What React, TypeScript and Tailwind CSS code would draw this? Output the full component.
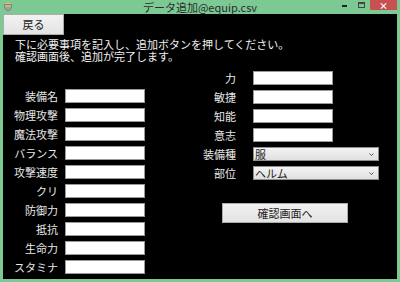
const leftFields = ["装備名", "物理攻撃", "魔法攻撃", "バランス", "攻撃速度", "クリ", "防御力", "抵抗", "生命力", "スタミナ"];
const rightFields = ["力", "敏捷", "知能", "意志"];
const selects = [
  { label: "装備種", value: "服" },
  { label: "部位", value: "ヘルム" },
];

const font = { fontFamily: '"Noto Sans CJK JP", "Noto Sans", sans-serif' };

function Field({ label, labelW, gap }: { label: string; labelW: string; gap: string }) {
  return (
    <div className={`flex h-[19px] items-start ${gap}`}>
      <span className={`${labelW} text-right text-[11px] leading-[14px] text-[#e8e8e8]`}>{label}</span>
      <div className="h-[14px] w-[80px] border border-[#9a9a9a] bg-white" />
    </div>
  );
}

export default function App() {
  return (
    <div className="flex h-[282px] w-[400px] flex-col bg-[#7cc994]" style={font}>
      <div className="relative flex h-[16px] items-center justify-center">
        <svg className="absolute left-[3px] top-[1px]" width="10" height="11" viewBox="0 0 10 11">
          <ellipse cx="5" cy="3" rx="3.5" ry="1.6" fill="#d8c060" />
          <path d="M1.5 3.5 Q1 9 5 10 Q9 9 8.5 3.5 Z" fill="#a0a0a0" stroke="#666" strokeWidth="0.6" />
          <path d="M2 5 L8 5" stroke="#e6d070" strokeWidth="1" />
        </svg>
        <span className="text-[11px] leading-[14px] text-[#2b2b2b]">データ追加@equip.csv</span>
        <div className="absolute right-[3px] top-0 flex items-start">
          <div className="mr-[11px] mt-[5px] h-[2px] w-[5px] bg-[#222]" />
          <div className="mr-[5px] mt-[2px] h-[6px] w-[7px] border border-[#444] border-t-2" />
          <div className="flex h-[10px] w-[27px] items-center justify-center bg-[#c75050] text-[9px] font-bold leading-none text-white">
            ×
          </div>
        </div>
      </div>

      <div className="mx-[3px] mb-[3px] flex flex-1 flex-col bg-black">
        <button className="h-[21px] w-[61px] border border-[#acacac] bg-gradient-to-b from-[#f2f2f2] to-[#e3e3e3] text-[11px] leading-none text-[#222]">
          戻る
        </button>
        <div className="ml-[12px] mt-[3px] flex flex-col text-[11px] leading-[12px] text-[#f0f0f0]">
          <span className="h-[12px]">下に必要事項を記入し、追加ボタンを押してください。</span>
          <span className="h-[12px]">確認画面後、追加が完了します。</span>
        </div>

        <div className="mt-[9px] flex">
          <div className="flex w-[142px] flex-col pt-[18px]">
            {leftFields.map((f) => (
              <Field key={f} label={f} labelW="w-[55px]" gap="gap-[7px]" />
            ))}
          </div>

          <div className="ml-[45px] flex flex-col">
            {rightFields.map((f) => (
              <Field key={f} label={f} labelW="w-[46px]" gap="gap-[17px]" />
            ))}
            {selects.map((s) => (
              <div key={s.label} className="flex h-[19px] items-start gap-[17px]">
                <span className="w-[46px] text-right text-[11px] leading-[14px] text-[#e8e8e8]">{s.label}</span>
                <div className="flex h-[14px] w-[126px] items-center justify-between border border-[#8f8f8f] bg-gradient-to-b from-[#f4f4f4] to-[#e0e0e0] pl-[1px] pr-[4px]">
                  <span className="text-[11px] leading-none text-[#222]">{s.value}</span>
                  <svg width="5" height="3" viewBox="0 0 5 3">
                    <path d="M0.5 0.5 L2.5 2.5 L4.5 0.5" fill="none" stroke="#444" strokeWidth="0.9" />
                  </svg>
                </div>
              </div>
            ))}
            <button className="ml-[32px] mt-[18px] h-[20px] w-[126px] border border-[#acacac] bg-gradient-to-b from-[#f2f2f2] to-[#e3e3e3] text-[11px] leading-none text-[#222]">
              確認画面へ
            </button>
          </div>
        </div>
      </div>
    </div>
  );
}
